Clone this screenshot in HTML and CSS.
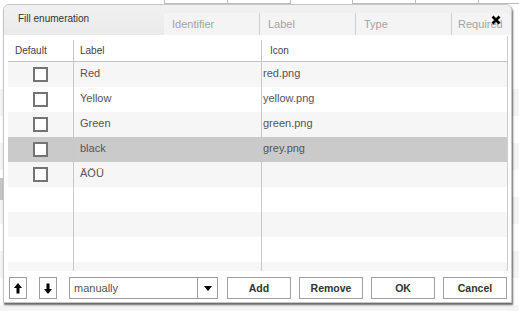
FILE: index.html
```html
<!DOCTYPE html>
<html>
<head>
<meta charset="utf-8">
<link rel="stylesheet" href="styles.css">
</head>
<body>
<div class="page">
  <div class="topstrip">
    <div class="tbox"><div class="tcell"></div><div class="tcell"></div></div>
    <div class="tbox tbox2"><div class="tcell"></div><div class="tcell"></div><div class="tcell"></div></div>
  </div>
  <div class="rows">
    <div class="leftmark"></div>
  </div>
</div>

<div class="dialog">
  <div class="titlebar">Fill enumeration</div>
  <div class="grid">
    <div class="ghead">
      <div class="c1">Default</div>
      <div class="c2">Label</div>
      <div class="c3">Icon</div>
    </div>
    <div class="gbody">
      <div class="row odd"><div class="c1"><span class="cb"></span></div><div class="c2">Red</div><div class="c3">red.png</div></div>
      <div class="row"><div class="c1"><span class="cb"></span></div><div class="c2">Yellow</div><div class="c3">yellow.png</div></div>
      <div class="row odd"><div class="c1"><span class="cb"></span></div><div class="c2">Green</div><div class="c3">green.png</div></div>
      <div class="row sel"><div class="c1"><span class="cb"></span></div><div class="c2">black</div><div class="c3">grey.png</div></div>
      <div class="row odd"><div class="c1"><span class="cb"></span></div><div class="c2">ÄÖÜ</div><div class="c3"></div></div>
      <div class="row"><div class="c1"></div><div class="c2"></div><div class="c3"></div></div>
      <div class="row odd"><div class="c1"></div><div class="c2"></div><div class="c3"></div></div>
      <div class="row"><div class="c1"></div><div class="c2"></div><div class="c3"></div></div>
      <div class="row odd"><div class="c1"></div><div class="c2"></div><div class="c3"></div></div>
    </div>
  </div>
  <div class="toolbar">
    <button class="ibtn" type="button"><svg width="8" height="11" viewBox="0 0 8 11"><polygon points="0,5 4,0 8,5" fill="#000"/><rect x="2.5" y="4.5" width="3" height="6" fill="#000"/></svg></button>
    <button class="ibtn" type="button"><svg width="8" height="11" viewBox="0 0 8 11"><polygon points="0,6 4,11 8,6" fill="#000"/><rect x="2.5" y="0.5" width="3" height="6" fill="#000"/></svg></button>
    <div class="select"><span class="sval">manually</span><span class="sarrow"><svg width="8" height="5" viewBox="0 0 8 5"><polygon points="0,0 8,0 4,5" fill="#000"/></svg></span></div>
    <div class="btns">
      <button class="btn" type="button">Add</button>
      <button class="btn" type="button">Remove</button>
      <button class="btn" type="button">OK</button>
      <button class="btn" type="button">Cancel</button>
    </div>
  </div>
</div>

<div class="bghead">
  <div class="h h1">Identifier</div>
  <div class="h h2">Label</div>
  <div class="h h3">Type</div>
  <div class="h h4">Required</div>
</div>
<div class="close"><svg width="10" height="10" viewBox="0 0 10 10"><path d="M1.5 1.5 L8.5 8.5 M8.5 1.5 L1.5 8.5" stroke="#000" stroke-width="2.6" fill="none"/></svg></div>
</body>
</html>
```

FILE: styles.css
```css
html, body {
  margin: 0;
  padding: 0;
}
body {
  width: 519px;
  height: 311px;
  overflow: hidden;
  background: #fff;
  font-family: "Liberation Sans", Arial, sans-serif;
  font-size: 11px;
  color: #444;
  position: relative;
}
.page {
  display: flex;
  flex-direction: column;
}
.topstrip {
  height: 4px;
  display: flex;
  padding-left: 164px;
  gap: 61px;
}
.tbox {
  display: flex;
  height: 3px;
  border-bottom: 1px solid #bdbdbd;
  border-left: 1px solid #bdbdbd;
}
.tcell {
  width: 62px;
  border-right: 1px solid #bdbdbd;
}
.rows {
  margin-top: 85px;
  height: 222px;
  background: repeating-linear-gradient(to bottom, #f4f4f4 0, #f4f4f4 27px, #fff 27px, #fff 54px);
}
.leftmark {
  margin-top: 89px;
  width: 3px;
  height: 22px;
  background: #c4c4c4;
}

.dialog {
  position: absolute;
  left: 3px;
  top: 4px;
  width: 507px;
  height: 297px;
  border: 1px solid #c6c6c6;
  border-radius: 6px 6px 0 0;
  background: #fff;
  box-shadow: 1px 2px 2px rgba(0, 0, 0, 0.6);
  overflow: hidden;
  display: flex;
  flex-direction: column;
}
.titlebar {
  height: 30px;
  line-height: 28px;
  padding-left: 14px;
  background: linear-gradient(to bottom, #f1f1f1, #eaeaea);
  color: #333;
  font-size: 10px;
}
.grid {
  margin: 1px 3px 0 4px;
  border-right: 1px solid #cfcfcf;
}
.ghead {
  display: grid;
  grid-template-columns: 65px 188px 1fr;
  height: 25px;
  border-bottom: 1px solid #c4c4c4;
  color: #444;
  font-size: 10px;
}
.ghead > div {
  line-height: 21px;
  margin-top: 4px;
}
.ghead .c1 {
  padding-left: 7px;
}
.ghead .c2 {
  padding-left: 6px;
  border-left: 1px solid #c8c8c8;
}
.ghead .c3 {
  padding-left: 8px;
  border-left: 1px solid #c8c8c8;
}
.gbody {
  height: 209px;
  overflow: hidden;
}
.row {
  display: grid;
  grid-template-columns: 65px 188px 1fr;
  height: 25px;
  line-height: 22px;
  color: #555;
  background: #fff;
}
.row.odd {
  background: #f6f6f6;
}
.row.sel {
  background: #cacaca;
}
.row .c1 {
  display: flex;
  justify-content: center;
  align-items: center;
}
.row .c2 {
  padding-left: 6px;
  border-left: 1px solid #c8c8c8;
}
.row .c3 {
  padding-left: 1px;
  border-left: 1px solid #c8c8c8;
}
.cb {
  display: block;
  width: 11px;
  height: 11px;
  border: 2px solid #747474;
  background: #fff;
}

.toolbar {
  display: flex;
  align-items: center;
  margin-top: 6px;
  padding-left: 5px;
  height: 22px;
}
.ibtn {
  width: 18px;
  height: 22px;
  margin: 0 12px 0 0;
  padding: 0;
  border: 1px solid #9c9c9c;
  background: #fff;
  display: flex;
  align-items: center;
  justify-content: center;
}
.select {
  width: 147px;
  height: 20px;
  border: 1px solid #9c9c9c;
  display: flex;
  align-items: center;
  background: #fff;
}
.sval {
  flex: 1;
  padding-left: 4px;
  font-size: 11px;
  color: #555;
}
.sarrow {
  width: 19px;
  height: 20px;
  border-left: 1px solid #9c9c9c;
  display: flex;
  align-items: center;
  justify-content: center;
}
.btns {
  display: flex;
  gap: 8px;
  margin-left: 9px;
}
.btn {
  width: 64px;
  height: 22px;
  padding: 0;
  border: 1px solid #a0a0a0;
  background: #fff;
  font-family: "Liberation Sans", Arial, sans-serif;
  font-size: 10.5px;
  font-weight: bold;
  color: #333;
}

.bghead {
  position: absolute;
  left: 164px;
  top: 13px;
  width: 347px;
  height: 22px;
  background: #f4f4f4;
  display: flex;
  color: #a3a3a3;
  font-size: 11px;
  line-height: 22px;
  border-top-right-radius: 5px;
}
.h {
  padding-left: 8px;
  box-sizing: border-box;
}
.h1 { width: 95px; }
.h2 { width: 96px; border-left: 1px solid #cfcfcf; }
.h3 { width: 96px; border-left: 1px solid #cfcfcf; }
.h4 { flex: 1; border-left: 1px solid #cfcfcf; padding-left: 6px; }
.close {
  position: absolute;
  left: 491px;
  top: 15px;
  width: 10px;
  height: 10px;
  display: flex;
}
```
